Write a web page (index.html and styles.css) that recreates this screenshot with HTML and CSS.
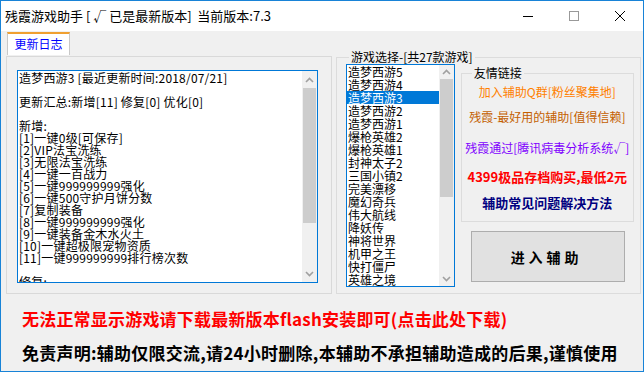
FILE: index.html
```html
<!DOCTYPE html>
<html>

<head>
    <title>残霞游戏助手</title>
    <link rel="stylesheet" href="styles.css">
</head>

<body>
    <div class="window">
        <div class="titlebar">
            <div class="title">残霞游戏助手 [ √ 已是最新版本]&nbsp; 当前版本:7.3</div>
            <div class="controls">
                <span class="ctl"><svg width="10" height="10"><path d="M0 5.5h10" stroke="#000" stroke-width="1"/></svg></span>
                <span class="ctl"><svg width="10" height="10"><rect x="0.5" y="0.5" width="9" height="9" fill="none" stroke="#999" stroke-width="1"/></svg></span>
                <span class="ctl"><svg width="10" height="10"><path d="M0 0L10 10M10 0L0 10" stroke="#000" stroke-width="1"/></svg></span>
            </div>
        </div>

        <div class="body">
            <div class="main">
                <!-- 更新日志 -->
                <div class="tabs">
                    <div class="tab-head">
                        <div class="tab">更新日志</div>
                    </div>
                    <div class="tab-panel">
                        <div class="log">
                            <div class="log-text">造梦西游3 [最近更新时间:2018/07/21]
&nbsp;
更新汇总:新增[11] 修复[0] 优化[0]
&nbsp;
新增:
[1]一键0级[可保存]
[2]VIP法宝洗练
[3]无限法宝洗练
[4]一键一百战力
[5]一键999999999强化
[6]一键500守护月饼分数
[7]复制装备
[8]一键999999999强化
[9]一键装备金木水火土
[10]一键超极限宠物资质
[11]一键999999999排行榜次数
&nbsp;
修复:</div>
                            <div class="vscroll log-scroll">
                                <div class="arrow"><svg width="9" height="6"><path d="M1 5L4.5 1.5L8 5" fill="none" stroke="#a0a0a0" stroke-width="1.6"/></svg></div>
                                <div class="thumb"></div>
                                <div class="track"></div>
                                <div class="arrow"><svg width="9" height="6"><path d="M1 1L4.5 4.5L8 1" fill="none" stroke="#a0a0a0" stroke-width="1.6"/></svg></div>
                            </div>
                        </div>
                    </div>
                </div>

                <!-- 游戏选择 -->
                <fieldset class="games">
                    <legend>游戏选择-[共27款游戏]</legend>
                    <div class="games-row">
                        <div class="listbox">
                            <ul class="items">
                                <li>造梦西游5</li>
                                <li>造梦西游4</li>
                                <li class="selected">造梦西游3</li>
                                <li>造梦西游2</li>
                                <li>造梦西游1</li>
                                <li>爆枪英雄2</li>
                                <li>爆枪英雄1</li>
                                <li>封神太子2</li>
                                <li>三国小镇2</li>
                                <li>完美漂移</li>
                                <li>魔幻奇兵</li>
                                <li>伟大航线</li>
                                <li>降妖传</li>
                                <li>神将世界</li>
                                <li>机甲之王</li>
                                <li>快打僵尸</li>
                                <li>英雄之境</li>
                            </ul>
                            <div class="vscroll list-scroll">
                                <div class="arrow"><svg width="9" height="6"><path d="M1 5L4.5 1.5L8 5" fill="none" stroke="#a0a0a0" stroke-width="1.6"/></svg></div>
                                <div class="thumb"></div>
                                <div class="track"></div>
                                <div class="arrow"><svg width="9" height="6"><path d="M1 1L4.5 4.5L8 1" fill="none" stroke="#a0a0a0" stroke-width="1.6"/></svg></div>
                            </div>
                        </div>

                        <div class="side">
                            <fieldset class="links">
                                <legend>友情链接</legend>
                                <a href="#" class="link link-qq">加入辅助Q群[粉丝聚集地]</a>
                                <a href="#" class="link link-best">残霞-最好用的辅助[值得信赖]</a>
                                <a href="#" class="link link-safe">残霞通过[腾讯病毒分析系统√]</a>
                                <a href="#" class="link link-buy">4399极品存档购买,最低2元</a>
                                <a href="#" class="link link-help">辅助常见问题解决方法</a>
                            </fieldset>
                            <button class="enter">进入辅助</button>
                        </div>
                    </div>
                </fieldset>
            </div>

            <div class="notice">无法正常显示游戏请下载最新版本flash安装即可(点击此处下载)</div>
            <div class="disclaimer">免责声明:辅助仅限交流,请24小时删除,本辅助不承担辅助造成的后果,谨慎使用</div>
        </div>
    </div>
</body>

</html>
```

FILE: styles.css
```css
body {
    margin: 0;
    padding: 0;
    font-family: "Noto Sans CJK SC", "Noto Sans", sans-serif;
    font-size: 12px;
    color: #000;
    background-color: #fff;
}

.window {
    width: 644px;
    height: 372px;
    box-sizing: border-box;
    border: 1px solid #1883d7;
    background-color: #f0f0f0;
    display: flex;
    flex-direction: column;
}

/* Title bar */
.titlebar {
    height: 30px;
    background-color: #fff;
    display: flex;
    align-items: center;
    flex-shrink: 0;
}

.title {
    flex: 1;
    padding-left: 4px;
    font-size: 13px;
    line-height: 30px;
}

.controls {
    display: flex;
    height: 30px;
}

.ctl {
    width: 46px;
    height: 30px;
    display: flex;
    align-items: center;
    justify-content: center;
}

/* Body */
.body {
    flex: 1;
    padding: 0 2px 0 5px;
    display: flex;
    flex-direction: column;
}

.main {
    display: flex;
    gap: 4px;
    height: 263px;
}

/* Tab control */
.tabs {
    width: 326px;
    display: flex;
    flex-direction: column;
}

.tab-head {
    height: 25px;
    flex-shrink: 0;
}

.tab {
    width: 63px;
    height: 23px;
    box-sizing: border-box;
    margin: 1px 0 0 1px;
    background-color: #fff;
    border-top: 2px solid #f0a030;
    border-left: 1px solid #c8c8c8;
    border-right: 1px solid #c8c8c8;
    color: #0000ff;
    text-align: center;
    line-height: 20px;
}

.tab-panel {
    flex: 1;
    border: 1px solid #d9d9d9;
    padding: 13px 0 0 10px;
}

.log {
    width: 301px;
    height: 213px;
    box-sizing: border-box;
    border: 1px solid #0078d7;
    background-color: #fff;
    display: flex;
}

.log-text {
    flex: 1;
    overflow: hidden;
    white-space: pre-line;
    line-height: 12px;
    padding: 1px 0 0 1px;
    letter-spacing: 0.2px;
}

/* Scrollbars */
.vscroll {
    width: 15px;
    background-color: #f0f0f0;
    display: flex;
    flex-direction: column;
}

.vscroll .arrow {
    height: 17px;
    display: flex;
    align-items: center;
    justify-content: center;
    flex-shrink: 0;
}

.vscroll .thumb {
    background-color: #cdcdcd;
    margin: 0 1px;
}

.vscroll .track {
    flex: 1;
}

.log-scroll .thumb {
    height: 135px;
}

.list-scroll .arrow {
    height: 14px;
}

.list-scroll .thumb {
    height: 118px;
}

/* Game select group */
.games {
    flex: 1;
    margin: 19px 0 0 0;
    padding: 0 6px 6px 9px;
    border: 1px solid #dcdcdc;
    min-width: 0;
}

.games legend,
.links legend {
    padding: 0 2px;
    line-height: 14px;
    font-size: 12px;
}

.games legend {
    margin-left: 3px;
}

.games-row {
    display: flex;
    gap: 6px;
}

.listbox {
    width: 109px;
    height: 223px;
    box-sizing: border-box;
    border: 1px solid #0078d7;
    background-color: #fff;
    display: flex;
}

.items {
    flex: 1;
    list-style: none;
    margin: 0;
    padding: 0;
    overflow: hidden;
}

.items li {
    height: 13px;
    line-height: 13px;
    padding-left: 1px;
}

.items li.selected {
    background-color: #0078d7;
    color: #fff;
}

/* Friend links */
.side {
    width: 174px;
    margin-top: 2px;
}

.links {
    margin: 0;
    padding: 0 0 10px 0;
    border: 1px solid #dcdcdc;
    text-align: center;
}

.links legend {
    margin-left: 10px;
    text-align: left;
}

.link {
    display: block;
    line-height: 16px;
    text-decoration: none;
    white-space: nowrap;
}

.link-qq {
    margin-top: 4px;
    color: #ff8000;
}

.link-best {
    margin-top: 9px;
    color: #c46000;
}

.link-safe {
    margin-top: 15px;
    color: #8000ff;
}

.link-buy {
    margin-top: 13px;
    color: #ff0000;
    font-weight: bold;
    font-size: 13px;
}

.link-help {
    margin-top: 10px;
    color: #000080;
    font-weight: bold;
    font-size: 13px;
}

.enter {
    display: block;
    width: 154px;
    height: 51px;
    margin: 9px 0 0 10px;
    background-color: #e1e1e1;
    border: 1px solid #adadad;
    font-family: "Noto Sans CJK SC", sans-serif;
    font-size: 14px;
    font-weight: bold;
    letter-spacing: 4px;
    padding-left: 4px;
    color: #000;
}

/* Bottom text */
.notice {
    margin: 15px 0 0 16px;
    color: #ff0000;
    font-size: 17px;
    font-weight: bold;
    line-height: 20px;
    letter-spacing: 0.2px;
    white-space: nowrap;
}

.disclaimer {
    margin: 14px 0 0 16px;
    font-size: 17px;
    font-weight: bold;
    line-height: 20px;
    letter-spacing: 0.25px;
    white-space: nowrap;
}
```
